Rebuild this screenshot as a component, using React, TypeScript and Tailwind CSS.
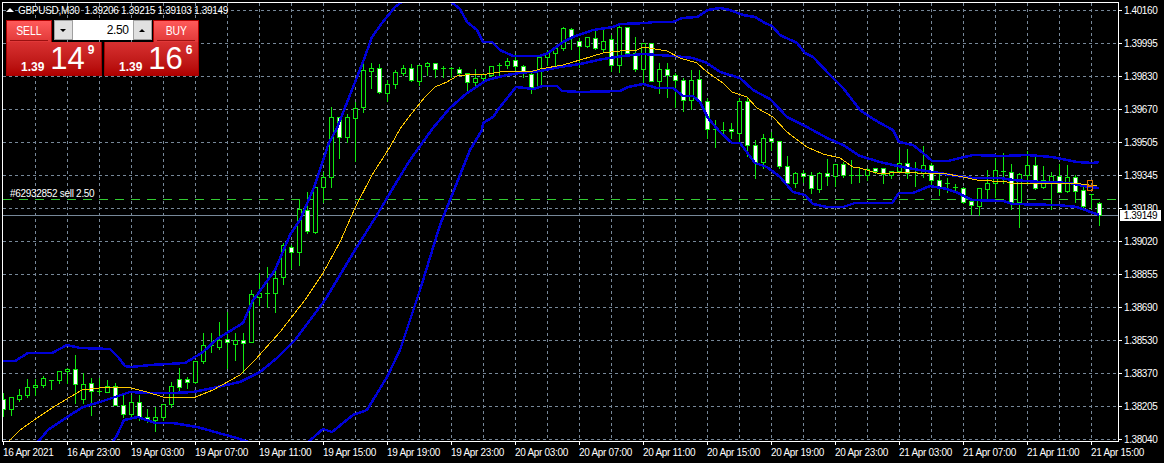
import React from 'react'

// hi, lo, body top, body bottom, white body (y in px, x = 3 + 8 * index)
const candles: [number, number, number, number, number][] = [
  [393, 416, 399, 409, 1], [397, 415, 397, 409, 0], [389, 401, 395, 399, 0], [379, 397, 387, 395, 0],
  [379, 395, 385, 387, 0], [376, 387, 378, 385, 0], [380, 389, 380, 380, 0], [371, 383, 371, 380, 0],
  [368, 383, 369, 371, 0], [355, 403, 369, 384, 1], [373, 403, 384, 399, 0], [378, 415, 383, 391, 1],
  [378, 393, 391, 391, 0], [380, 392, 386, 392, 0], [383, 405, 386, 405, 1], [395, 417, 405, 414, 1],
  [395, 418, 402, 414, 0], [395, 420, 402, 417, 1], [409, 422, 417, 420, 1], [407, 431, 417, 420, 0],
  [404, 420, 404, 417, 0], [382, 407, 386, 404, 0], [368, 391, 379, 387, 1], [377, 388, 379, 382, 1],
  [361, 383, 361, 382, 0], [333, 363, 345, 361, 0], [333, 352, 345, 345, 0], [322, 349, 340, 347, 0],
  [312, 368, 339, 342, 1], [333, 360, 340, 344, 0], [333, 372, 340, 343, 1], [290, 342, 294, 342, 0],
  [273, 305, 293, 297, 0], [267, 307, 293, 293, 0], [267, 312, 278, 293, 0], [243, 284, 245, 277, 0],
  [245, 268, 247, 252, 1], [199, 265, 209, 252, 0], [192, 233, 210, 231, 1], [183, 233, 187, 232, 0],
  [172, 202, 177, 187, 0], [107, 187, 117, 177, 0], [117, 158, 117, 137, 1], [114, 142, 117, 137, 0],
  [102, 161, 108, 118, 0], [63, 112, 70, 107, 0], [63, 88, 68, 71, 0], [64, 93, 68, 92, 1],
  [80, 101, 84, 93, 0], [70, 88, 72, 84, 0], [65, 75, 68, 73, 0], [64, 81, 68, 80, 1],
  [65, 85, 65, 81, 0], [62, 75, 63, 66, 0], [63, 77, 63, 69, 1], [66, 77, 68, 68, 0],
  [67, 77, 68, 68, 0], [67, 75, 69, 73, 1], [73, 92, 73, 82, 1], [69, 85, 78, 82, 0],
  [73, 80, 74, 78, 0], [66, 76, 66, 75, 0], [63, 76, 65, 65, 0], [58, 68, 61, 65, 0],
  [54, 70, 60, 66, 1], [65, 77, 66, 71, 1], [71, 93, 74, 87, 1], [56, 87, 57, 86, 0],
  [50, 65, 53, 57, 0], [47, 65, 48, 53, 0], [27, 50, 28, 48, 0], [28, 49, 29, 37, 1],
  [38, 67, 41, 46, 1], [37, 47, 37, 46, 0], [29, 49, 38, 48, 1], [28, 52, 41, 49, 0],
  [35, 71, 39, 65, 1], [25, 72, 27, 65, 0], [27, 53, 27, 53, 1], [37, 71, 53, 69, 1],
  [43, 83, 43, 69, 0], [43, 81, 43, 81, 1], [63, 93, 69, 81, 0], [63, 97, 69, 75, 1],
  [73, 107, 75, 80, 1], [78, 111, 80, 100, 1], [70, 109, 80, 100, 0], [70, 101, 79, 101, 1],
  [98, 138, 101, 129, 1], [120, 147, 129, 129, 0], [122, 133, 130, 130, 0], [123, 138, 129, 131, 1],
  [98, 143, 101, 133, 0], [97, 156, 101, 145, 1], [140, 178, 145, 162, 1], [134, 168, 138, 162, 0],
  [132, 150, 138, 141, 1], [141, 168, 141, 166, 1], [156, 187, 166, 183, 1], [172, 187, 173, 183, 0],
  [170, 182, 173, 176, 1], [172, 193, 175, 188, 1], [172, 192, 173, 189, 0], [159, 185, 173, 176, 1],
  [164, 186, 164, 176, 0], [162, 177, 164, 175, 1], [160, 183, 175, 175, 0], [168, 182, 175, 175, 0],
  [168, 180, 169, 175, 0], [168, 173, 168, 171, 1], [168, 183, 168, 174, 1], [171, 178, 171, 175, 0],
  [150, 172, 163, 171, 0], [149, 178, 163, 173, 1], [162, 186, 172, 172, 0], [146, 177, 165, 173, 0],
  [163, 185, 165, 180, 1], [173, 195, 180, 187, 1], [178, 192, 183, 183, 0], [184, 190, 187, 187, 0],
  [187, 203, 188, 202, 1], [201, 214, 201, 205, 1], [188, 215, 188, 206, 0], [170, 198, 183, 189, 0],
  [158, 197, 170, 183, 0], [153, 183, 171, 171, 0], [164, 209, 172, 202, 1], [173, 227, 174, 202, 0],
  [151, 184, 165, 175, 0], [154, 189, 165, 188, 1], [166, 188, 180, 187, 0], [172, 209, 176, 181, 0],
  [164, 192, 176, 192, 1], [165, 192, 177, 191, 0], [175, 202, 177, 191, 1], [187, 207, 190, 206, 1],
  [194, 208, 194, 194, 0], [202, 225, 203, 215, 1],
]

const upperBand = '3,361 15,361 28,353 52,353 67,345 80,348 110,349 118,357 125,366 131,367 150,365 185,363 190,360 203,352 217,339 243,323 253,300 257,295 275,270 290,235 300,220 315,185 328,145 337,128 348,100 363,62 372,37 382,23 395,7 403,1 450,1 460,9 467,22 477,30 483,42 492,42 500,50 513,56 540,56 548,53 563,42 573,37 593,30 613,27 620,24 647,23 653,22 673,22 682,18 697,17 708,10 720,8 730,10 743,15 755,17 765,23 772,26 780,35 797,43 805,53 813,57 830,75 843,88 860,110 870,117 880,123 893,130 899,142 913,145 923,153 932,161 948,161 960,158 973,155 1003,156 1027,155 1052,157 1077,162 1093,163 1099,162'
const middleBand = '37,443 48,430 67,417 83,407 100,402 115,397 130,392 150,393 173,393 193,392 213,388 240,382 260,372 277,358 295,340 325,300 340,275 355,250 377,215 390,193 410,160 433,128 450,108 467,93 487,80 507,75 520,73 540,71 560,67 580,64 603,59 623,56 643,54 673,56 693,58 707,63 720,72 740,78 753,90 770,99 787,117 807,127 827,138 843,145 860,156 880,162 893,165 913,169 933,172 957,176 973,178 1000,178 1013,180 1040,182 1070,183 1083,186 1099,188'
const lowerBandLeft = '112,443 117,435 124,420 138,417 155,423 173,423 197,427 233,437 252,443'
const lowerBandRight = '307,443 323,429 332,432 353,415 367,410 387,377 400,350 420,290 440,225 460,175 470,150 482,130 483,123 493,117 500,107 516,87 533,89 543,86 557,86 562,91 580,92 620,91 628,87 643,84 657,88 673,88 683,96 693,96 700,102 708,118 720,132 732,143 740,143 755,163 767,167 780,177 793,192 805,195 813,204 827,207 843,207 855,203 892,203 899,193 913,193 930,186 947,189 958,193 972,200 1003,201 1013,204 1057,205 1077,207 1099,215'
const movingAverage = '7,443 20,430 37,418 52,408 70,397 82,390 107,387 127,387 147,392 163,397 193,398 213,390 240,375 255,360 280,332 305,300 323,273 340,242 355,208 372,175 390,147 400,129 412,113 425,97 435,87 447,82 457,76 473,74 487,74 507,71 530,72 540,69 563,65 580,60 603,53 620,51 637,50 643,47 667,51 680,58 697,63 707,72 723,83 732,92 747,97 757,108 773,117 787,132 807,147 823,154 840,158 853,167 860,168 880,174 900,172 917,173 942,173 963,177 977,180 1007,182 1013,184 1030,183 1047,184 1073,183 1097,186'

const prices = ['1.40160', '1.39995', '1.39830', '1.39670', '1.39505', '1.39345', '1.39180', '1.39020', '1.38855', '1.38690', '1.38530', '1.38370', '1.38205', '1.38040']
const times = ['16 Apr 2021', '16 Apr 23:00', '19 Apr 03:00', '19 Apr 07:00', '19 Apr 11:00', '19 Apr 15:00', '19 Apr 19:00', '19 Apr 23:00', '20 Apr 03:00', '20 Apr 07:00', '20 Apr 11:00', '20 Apr 15:00', '20 Apr 19:00', '20 Apr 23:00', '21 Apr 03:00', '21 Apr 07:00', '21 Apr 11:00', '21 Apr 15:00']

const candleGreen = '#10e810'
const orderGreen = '#32cd32'
const slate = '#778899'

function Chart() {
  return (
    <svg width="1119" height="442" className="block" shapeRendering="crispEdges">
      <g stroke={slate} strokeDasharray="3 3">
        {prices.map((_, i) => (
          <line key={i} x1="3" x2="1118" y1={10.5 + 33 * i} y2={10.5 + 33 * i} />
        ))}
        {Array.from({ length: 34 }, (_, i) => (
          <line key={i} x1={35.5 + 32 * i} x2={35.5 + 32 * i} y1="3" y2="441" />
        ))}
      </g>
      <line x1="3" x2="1118" y1="199.5" y2="199.5" stroke={orderGreen} strokeDasharray="9 7" />
      <line x1="3" x2="1118" y1="215.5" y2="215.5" stroke={slate} />
      {candles.map(([hi, lo, top, bot, white], i) => {
        const x = 3 + 8 * i
        return (
          <g key={i} stroke={candleGreen}>
            <line x1={x + 0.5} x2={x + 0.5} y1={hi} y2={lo + 1} />
            {top === bot ? (
              <line x1={x - 2} x2={x + 3} y1={top + 0.5} y2={top + 0.5} />
            ) : (
              <rect x={x - 1.5} y={top + 0.5} width="4" height={bot - top} fill={white ? '#ffffff' : '#000000'} />
            )}
          </g>
        )
      })}
      <g fill="none" stroke="#0000d8" strokeWidth="2.5">
        <polyline points={upperBand} />
        <polyline points={middleBand} />
        <polyline points={lowerBandLeft} />
        <polyline points={lowerBandRight} />
      </g>
      <polyline points={movingAverage} fill="none" stroke="#ffc800" />
      <g fill="none" stroke="#e07000">
        <rect x="1087.5" y="180.5" width="5" height="6" />
        <circle cx="1090" cy="188" r="3" />
      </g>
      {/* axis frame goes last so it hides line ends and the first candle's left half */}
      <rect x="0" y="0" width="2" height="442" fill="#000000" stroke="none" />
      <rect x="0" y="0" width="1119" height="2" fill="#000000" stroke="none" />
      <rect x="0" y="442" width="1119" height="2" fill="#000000" stroke="none" />
      <g stroke="#ffffff">
        <line x1="2.5" x2="2.5" y1="2" y2="442" />
        <line x1="2" x2="1119" y1="2.5" y2="2.5" />
        <line x1="1118.5" x2="1118.5" y1="2" y2="442" />
        <line x1="2" x2="1119" y1="441.5" y2="441.5" />
      </g>
    </svg>
  )
}

function TradePanel() {
  return (
    <div className="absolute left-[6px] top-[20px] w-[193px] tracking-normal text-white">
      <div className="flex h-[22px] justify-between">
        <div className="w-[46px] border border-b-0 border-[#b00000] bg-linear-to-b from-[#ff5a5a] to-[#e03838] px-[3px]">
          <div className="h-[20px] border-b border-[#9a1010] text-center text-[13px] leading-[20px]">
            <span className="inline-block scale-x-[0.8]">SELL</span>
          </div>
        </div>
        <div className="flex h-[20px] w-[98px] bg-white">
          <button className="flex w-[19px] items-center justify-center border border-[#a0a0a0] bg-[#e0e0e0]">
            <span className="border-x-[3px] border-t-[3px] border-x-transparent border-t-black" />
          </button>
          <span className="flex-1 pr-[4px] text-right text-[12px] leading-[20px] tracking-[-0.4px] text-black">2.50</span>
          <button className="flex w-[19px] items-center justify-center border border-[#a0a0a0] bg-[#e0e0e0]">
            <span className="border-x-[3px] border-b-[3px] border-x-transparent border-b-black" />
          </button>
        </div>
        <div className="w-[46px] border border-b-0 border-[#b00000] bg-linear-to-b from-[#ff5a5a] to-[#e03838] px-[3px]">
          <div className="h-[20px] border-b border-[#9a1010] text-center text-[13px] leading-[20px]">
            <span className="inline-block scale-x-[0.8]">BUY</span>
          </div>
        </div>
      </div>
      <div className="flex h-[34px] justify-between">
        <div className="flex w-[96px] border border-t-0 border-[#a80000] bg-linear-to-b from-[#d83030] to-[#b00000] pl-[14px]">
          <span className="mt-[18px] text-[12px] font-bold leading-[14px]">1.39</span>
          <span className="ml-[6px] mt-[-1px] text-[31px] leading-[36px]">14</span>
          <span className="ml-[3px] mt-[1px] text-[12px] font-bold leading-[14px]">9</span>
        </div>
        <div className="flex w-[95px] border border-t-0 border-[#a80000] bg-linear-to-b from-[#d83030] to-[#b00000] pl-[14px]">
          <span className="mt-[18px] text-[12px] font-bold leading-[14px]">1.39</span>
          <span className="ml-[6px] mt-[-1px] text-[31px] leading-[36px]">16</span>
          <span className="ml-[3px] mt-[1px] text-[12px] font-bold leading-[14px]">6</span>
        </div>
      </div>
    </div>
  )
}

export default function App() {
  return (
    <div className="flex h-[463px] w-[1164px] flex-col overflow-hidden bg-black font-['Liberation_Sans',sans-serif] text-[10px] tracking-[-0.3px] text-white">
      <div className="relative flex h-[442px] shrink-0">
        <Chart />
        <div className="flex flex-col gap-[19px] pt-[3px]">
          {prices.map((price) => (
            <div key={price} className="flex h-[14px] items-center gap-[2px]">
              <span className="h-px w-[3px] bg-white" />
              <span className="tracking-[-0.4px]">{price}</span>
            </div>
          ))}
        </div>

        <div className="absolute left-[6px] top-[8px] border-x-[4px] border-b-[4px] border-x-transparent border-b-white" />
        <div className="absolute left-[18px] top-[4px] whitespace-pre leading-[13px]">GBPUSD,M30  1.39206 1.39215 1.39103 1.39149</div>
        <div className="absolute left-[10px] top-[187px] leading-[13px]">#62932852 sell 2.50</div>
        <div className="absolute left-[1120px] top-[210px] h-[11px] w-[41px] bg-white text-center leading-[11px] tracking-[-0.4px] text-black">1.39149</div>
        <TradePanel />
      </div>
      <div className="flex pl-[3px]">
        {times.map((time) => (
          <div key={time} className="w-[64px] shrink-0">
            <div className="h-[3px] w-px bg-white" />
            <div className="mt-[1px] whitespace-nowrap leading-[13px]">{time}</div>
          </div>
        ))}
      </div>
    </div>
  )
}
